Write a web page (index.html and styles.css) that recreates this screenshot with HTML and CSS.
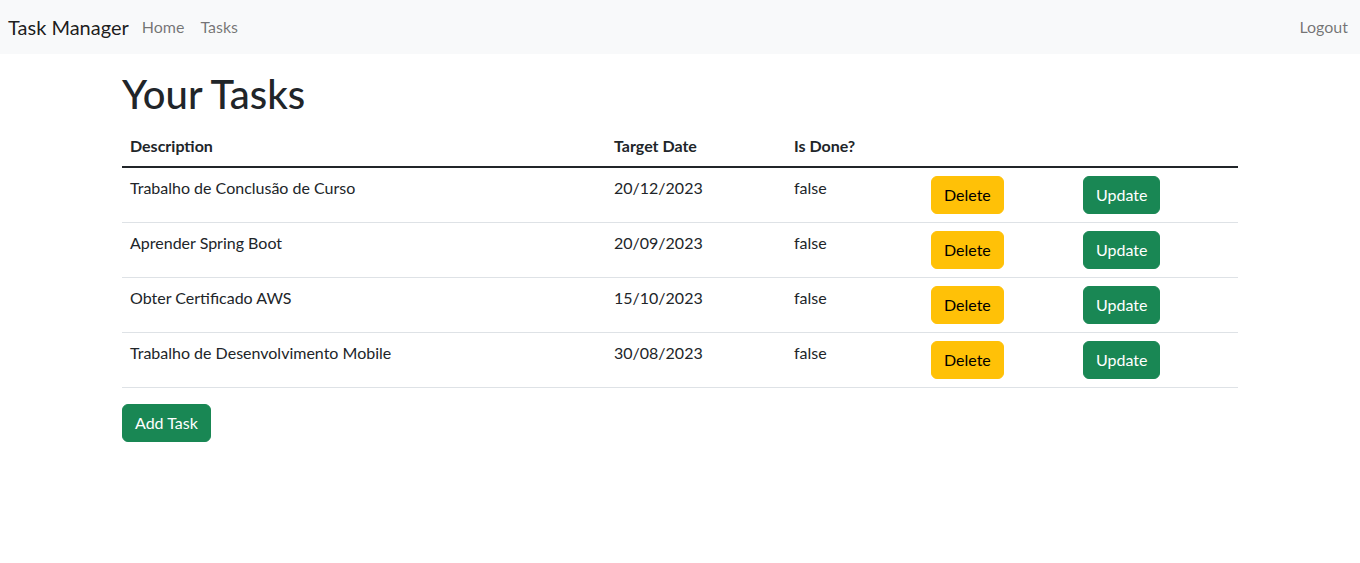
FILE: index.html
```html
<!DOCTYPE html>
<html lang="en">
<head>
<meta charset="utf-8">
<title>Task Manager</title>
<link rel="stylesheet" href="styles.css">
</head>
<body>
<nav class="navbar">
  <a class="brand" href="#">Task Manager</a>
  <ul class="nav-links">
    <li><a class="nav-link" href="#">Home</a></li>
    <li><a class="nav-link" href="#">Tasks</a></li>
  </ul>
  <ul class="nav-links nav-right">
    <li><a class="nav-link" href="#">Logout</a></li>
  </ul>
</nav>
<main class="container">
  <h1 class="title">Your Tasks</h1>
  <table class="table">
    <colgroup>
      <col class="c-desc"><col class="c-date"><col class="c-done"><col class="c-del"><col class="c-upd">
    </colgroup>
    <thead>
      <tr><th>Description</th><th>Target Date</th><th>Is Done?</th><th></th><th></th></tr>
    </thead>
    <tbody>
      <tr><td>Trabalho de Conclusão de Curso</td><td>20/12/2023</td><td>false</td><td><a class="btn btn-warning" href="#">Delete</a></td><td><a class="btn btn-success" href="#">Update</a></td></tr>
      <tr><td>Aprender Spring Boot</td><td>20/09/2023</td><td>false</td><td><a class="btn btn-warning" href="#">Delete</a></td><td><a class="btn btn-success" href="#">Update</a></td></tr>
      <tr><td>Obter Certificado AWS</td><td>15/10/2023</td><td>false</td><td><a class="btn btn-warning" href="#">Delete</a></td><td><a class="btn btn-success" href="#">Update</a></td></tr>
      <tr><td>Trabalho de Desenvolvimento Mobile</td><td>30/08/2023</td><td>false</td><td><a class="btn btn-warning" href="#">Delete</a></td><td><a class="btn btn-success" href="#">Update</a></td></tr>
    </tbody>
  </table>
  <a class="btn btn-success btn-add" href="#">Add Task</a>
</main>
</body>
</html>
```
FILE: styles.css
```css
* { box-sizing: border-box; }
body {
  margin: 0;
  font-family: "Segoe UI", Lato, "Noto Sans", "Liberation Sans", sans-serif;
  font-size: 16px;
  line-height: 1.5;
  color: #212529;
  background: #fff;
}
a { text-decoration: none; }
.navbar {
  display: flex;
  align-items: center;
  height: 54px;
  padding: 0 4px 0 8px;
  background: #f8f9fa;
}
.brand {
  font-size: 20px;
  line-height: 30px;
  color: rgba(0,0,0,.9);
  margin-right: 5px;
}
.nav-links {
  display: flex;
  list-style: none;
  margin: 0;
  padding: 0;
}
.nav-right { margin-left: auto; }
.nav-link {
  display: block;
  padding: 8px 8px;
  color: rgba(0,0,0,.55);
}
.container {
  max-width: 1140px;
  margin: 16px auto 0;
  padding: 0 12px;
}
.title {
  font-size: 40px;
  font-weight: 500;
  line-height: 1.2;
  margin: 0 0 8px;
}
.table {
  width: 100%;
  border-collapse: collapse;
  margin-bottom: 16px;
}
.c-desc { width: 484px; }
.c-date { width: 180px; }
.c-done { width: 137px; }
.c-del { width: 152px; }
.c-upd { width: 163px; }
.table th, .table td {
  padding: 8px;
  text-align: left;
  vertical-align: top;
  border-bottom: 1px solid #dee2e6;
}
.table th { font-weight: 700; }
.table thead th { border-bottom: 2px solid #212529; }
.btn {
  display: inline-block;
  padding: 6px 12px;
  font-size: 16px;
  line-height: 24px;
  border: 1px solid transparent;
  border-radius: 6px;
}
.btn-warning { background: #ffc107; border-color: #ffc107; color: #000; }
.btn-success { background: #198754; border-color: #198754; color: #fff; }
```
